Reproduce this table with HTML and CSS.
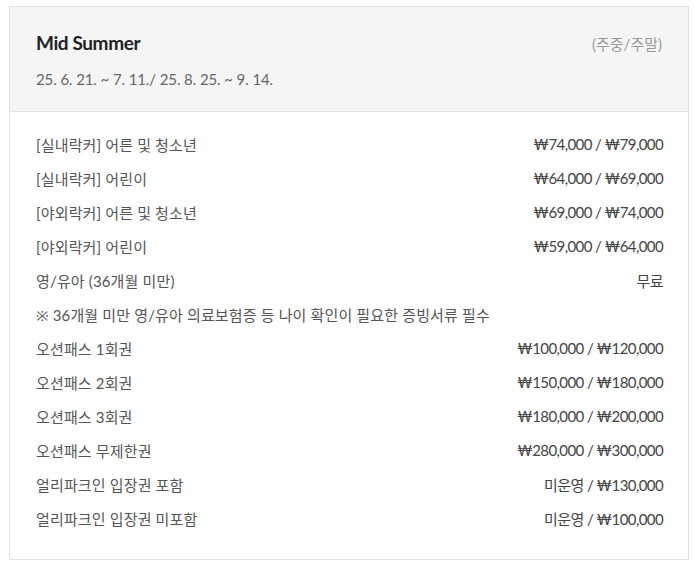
FILE: index.html
```html
<!DOCTYPE html>
<html lang="ko">
<head>
<meta charset="utf-8">
<link rel="stylesheet" href="styles.css">
</head>
<body>
<div class="page">
  <section class="card">
    <header class="card-head">
      <div class="head-top">
        <h2 class="title">Mid Summer</h2>
        <span class="note">(주중/주말)</span>
      </div>
      <p class="dates">25. 6. 21. ~ 7. 11./ 25. 8. 25. ~ 9. 14.</p>
    </header>
    <ul class="rows">
      <li class="row"><span class="label">[실내락커] 어른 및 청소년</span><span class="price">₩74,000 / ₩79,000</span></li>
      <li class="row"><span class="label">[실내락커] 어린이</span><span class="price">₩64,000 / ₩69,000</span></li>
      <li class="row"><span class="label">[야외락커] 어른 및 청소년</span><span class="price">₩69,000 / ₩74,000</span></li>
      <li class="row"><span class="label">[야외락커] 어린이</span><span class="price">₩59,000 / ₩64,000</span></li>
      <li class="row"><span class="label">영/유아 (36개월 미만)</span><span class="price">무료</span></li>
      <li class="row"><span class="label">※ 36개월 미만 영/유아 의료보험증 등 나이 확인이 필요한 증빙서류 필수</span></li>
      <li class="row"><span class="label">오션패스 1회권</span><span class="price">₩100,000 / ₩120,000</span></li>
      <li class="row"><span class="label">오션패스 2회권</span><span class="price">₩150,000 / ₩180,000</span></li>
      <li class="row"><span class="label">오션패스 3회권</span><span class="price">₩180,000 / ₩200,000</span></li>
      <li class="row"><span class="label">오션패스 무제한권</span><span class="price">₩280,000 / ₩300,000</span></li>
      <li class="row"><span class="label">얼리파크인 입장권 포함</span><span class="price">미운영 / ₩130,000</span></li>
      <li class="row"><span class="label">얼리파크인 입장권 미포함</span><span class="price">미운영 / ₩100,000</span></li>
    </ul>
  </section>
</div>
</body>
</html>
```

FILE: styles.css
```css
* { box-sizing: border-box; }
html, body { margin: 0; padding: 0; background: #fff; }
body {
  font-family: Lato, "Noto Sans", "Noto Sans CJK KR", sans-serif;
  color: #555;
}
.page {
  padding: 6px 6px 0 9px;
}
.card {
  width: 680px;
  border: 1px solid #e2e2e2;
}
.card-head {
  background: #f5f5f5;
  border-bottom: 1px solid #e2e2e2;
  padding: 24px 26px 21px 26px;
}
.head-top {
  display: flex;
  justify-content: space-between;
  align-items: center;
}
.title {
  margin: 0;
  font-size: 19px;
  font-weight: 700;
  color: #222;
  line-height: 24px;
  letter-spacing: -0.4px;
}
.note {
  font-size: 15px;
  color: #999;
}
.dates {
  margin: 13px 0 0;
  font-size: 15px;
  line-height: 22px;
  color: #666;
  letter-spacing: -0.1px;
}
.rows {
  list-style: none;
  margin: 0;
  padding: 15px 25px 24px 26px;
}
.row {
  display: flex;
  justify-content: space-between;
  align-items: center;
  height: 34px;
  font-size: 15px;
}
.label {
  color: #555;
  letter-spacing: 0.15px;
}
.price {
  color: #444;
  letter-spacing: -0.6px;
}
```
